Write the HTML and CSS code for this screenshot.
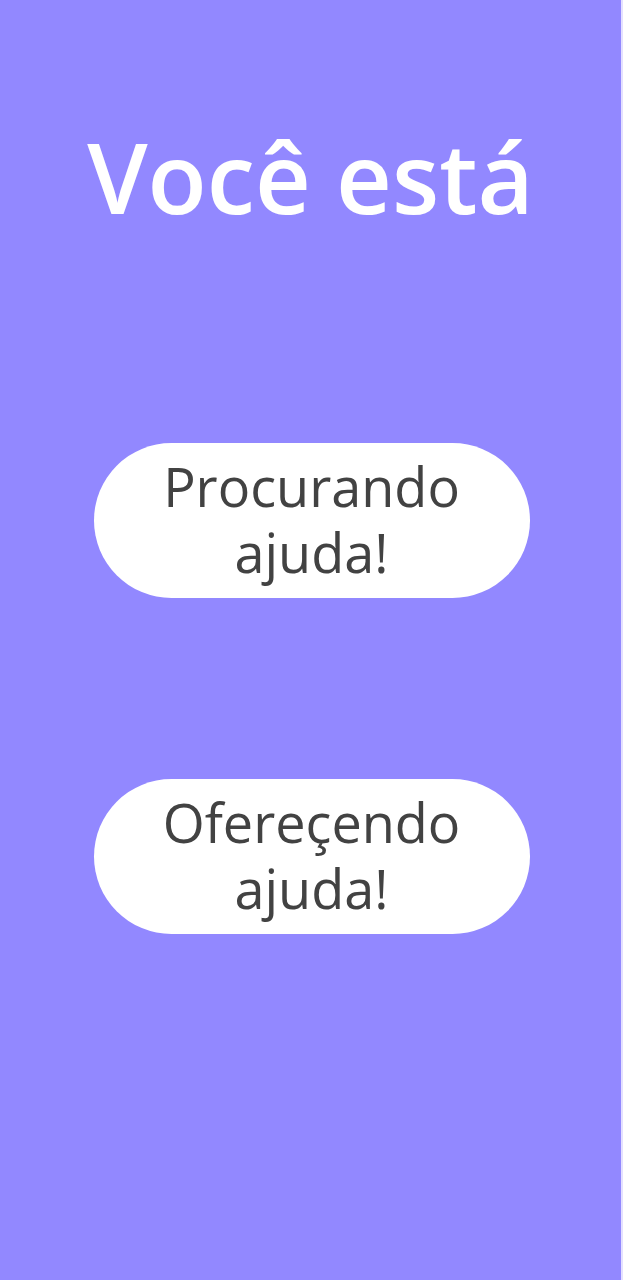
FILE: index.html
```html
<!DOCTYPE html>
<html lang="pt">
<head>
<meta charset="utf-8">
<link rel="stylesheet" href="styles.css">
</head>
<body>
<main class="screen">
  <h1 class="title">Você está</h1>
  <div class="options">
    <button class="option">Procurando<br>ajuda!</button>
    <button class="option">Ofereçendo<br>ajuda!</button>
  </div>
</main>
</body>
</html>
```
FILE: styles.css
```css
html, body {
  margin: 0;
  padding: 0;
  background: #e4e0ff;
}
.screen {
  width: 621px;
  height: 1280px;
  background: #9288ff;
  display: flex;
  flex-direction: column;
  align-items: center;
  font-family: "Open Sans", "Noto Sans", sans-serif;
}
.title {
  margin: 114px 0 0 0;
  color: #ffffff;
  font-size: 97px;
  font-weight: 600;
  line-height: 124px;
  letter-spacing: 0;
}
.options {
  display: flex;
  flex-direction: column;
  gap: 181px;
  margin-top: 205px;
}
.option {
  width: 436px;
  height: 155px;
  border: none;
  border-radius: 78px;
  background: #ffffff;
  color: #424242;
  font-family: inherit;
  font-size: 54px;
  line-height: 66px;
  font-weight: 400;
  padding: 0 0 4px 0;
  margin-left: 2px;
}
```
